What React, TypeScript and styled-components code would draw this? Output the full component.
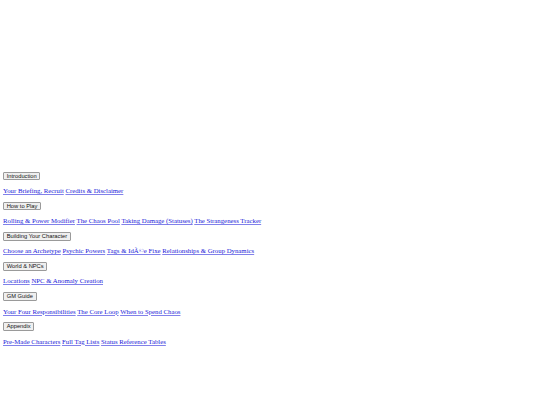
import React from "react";
import styled, { createGlobalStyle } from "styled-components";

const Global = createGlobalStyle`
  html, body { margin: 0; padding: 0; background: #fff; }
  body { font-family: "Liberation Serif", "Times New Roman", serif; }
`;

const Page = styled.div`
  padding: 172px 3px 0 3px;
  display: flex;
  flex-direction: column;
  gap: 6.85px;
`;

const Section = styled.section`
  display: flex;
  flex-direction: column;
  align-items: flex-start;
  gap: 6.85px;
`;

const TabButton = styled.button`
  font-family: "Liberation Sans", Arial, sans-serif;
  font-size: 5.75px;
  line-height: 6.6px;
  height: 8.4px;
  color: #111;
  background: #efefef;
  border: 0.5px solid #9a9a9a;
  border-radius: 1px;
  padding: 0 2.7px;
  margin: 0;
  cursor: pointer;
`;

const LinkRow = styled.div`
  font-size: 6.78px;
  line-height: 8px;
  color: #000;
`;

const Link = styled.a`
  color: #1a1ad8;
  text-decoration: underline;
  text-decoration-thickness: 1px;
  text-decoration-color: rgba(26, 26, 216, 0.55);
  text-underline-offset: 1px;
`;

const sections: { title: string; links: string[] }[] = [
  { title: "Introduction", links: ["Your Briefing, Recruit", "Credits & Disclaimer"] },
  {
    title: "How to Play",
    links: ["Rolling & Power Modifier", "The Chaos Pool", "Taking Damage (Statuses)", "The Strangeness Tracker"],
  },
  {
    title: "Building Your Character",
    links: ["Choose an Archetype", "Psychic Powers", "Tags & IdÃ©e Fixe", "Relationships & Group Dynamics"],
  },
  { title: "World & NPCs", links: ["Locations", "NPC & Anomaly Creation"] },
  { title: "GM Guide", links: ["Your Four Responsibilities", "The Core Loop", "When to Spend Chaos"] },
  { title: "Appendix", links: ["Pre-Made Characters", "Full Tag Lists", "Status Reference Tables"] },
];

export default function App() {
  return (
    <>
      <Global />
      <Page>
        {sections.map((s) => (
          <Section key={s.title}>
            <TabButton type="button">{s.title}</TabButton>
            <LinkRow>
              {s.links.map((l, i) => (
                <React.Fragment key={l}>
                  {i > 0 && " "}
                  <Link href="#">{l}</Link>
                </React.Fragment>
              ))}
            </LinkRow>
          </Section>
        ))}
      </Page>
    </>
  );
}
